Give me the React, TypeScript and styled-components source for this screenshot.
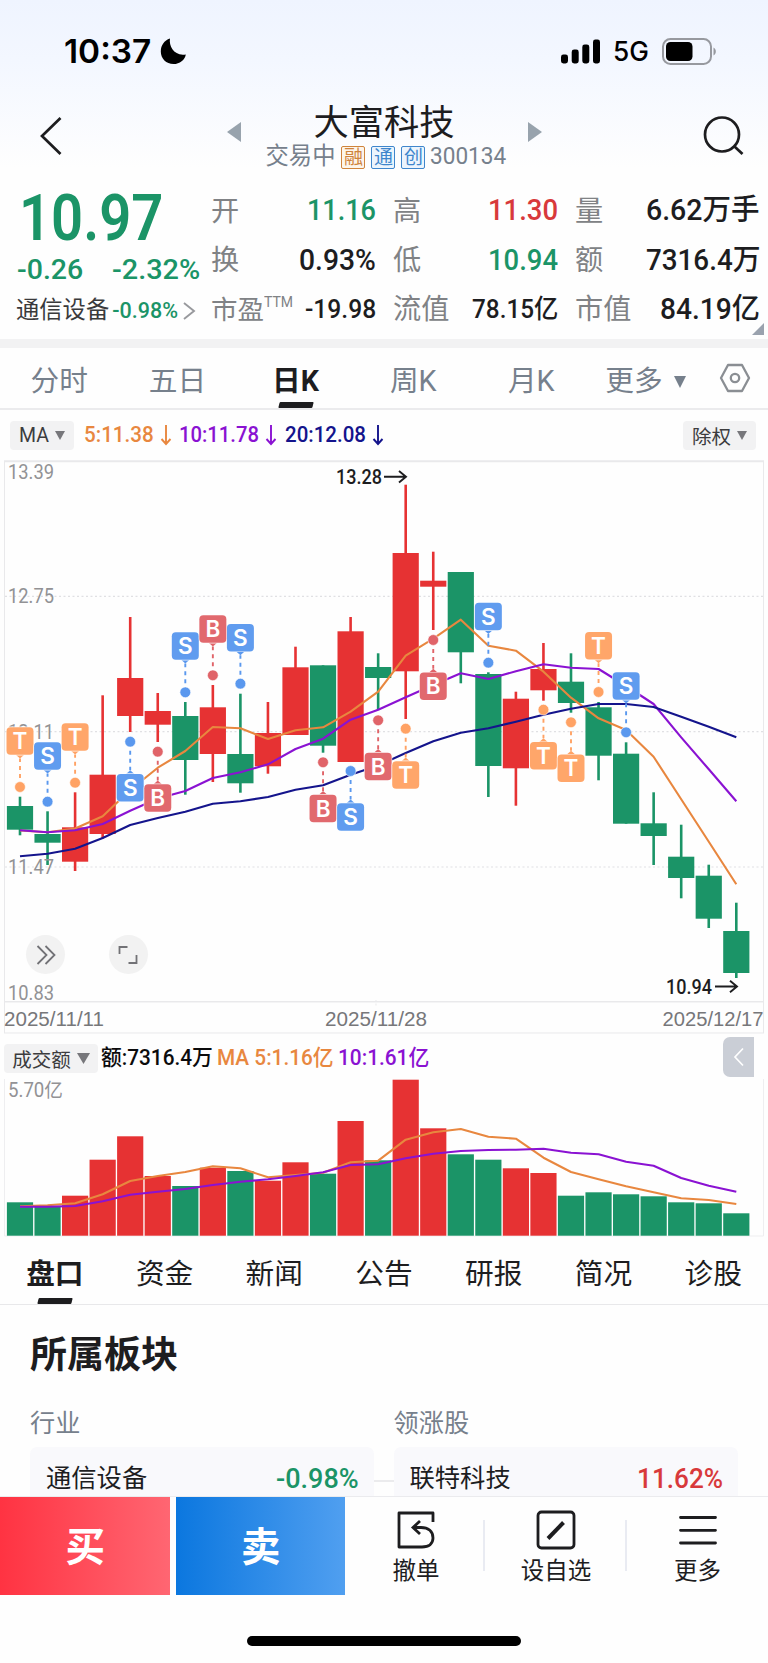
import React, { useLayoutEffect, useRef, useState } from "react";
import styled, { createGlobalStyle } from "styled-components";

const RED = "#e63233";
const GREEN = "#1b9467";
const ORANGE = "#e8873f";
const PURPLE = "#8a12d2";
const NAVY = "#14148c";
const INK = "#1d1d1f";
const SLATE = "#76808c";
const FONT = `Roboto, "Noto Sans CJK SC", sans-serif`;

const GlobalStyle = createGlobalStyle`
  * { box-sizing: border-box; }
  body { margin: 0; background: #fefefe; }
  svg { display: block; }
`;

const Page = styled.div`
  width: 768px;
  height: 1663px;
  overflow: hidden;
  display: flex;
  flex-direction: column;
  font-family: ${FONT};
  color: ${INK};
  line-height: 1;
  background: linear-gradient(#eff4ff 0px, #f3f7ff 60px, #fefefe 168px);
`;

/* Condensed figures: the text is squeezed to the given width. */
const FitBox = styled.span<{ $w: number; $size: number; $color?: string; $weight?: number }>`
  display: block;
  flex: none;
  width: ${(p) => p.$w}px;
  height: ${(p) => p.$size}px;
  font-size: ${(p) => p.$size}px;
  font-weight: ${(p) => p.$weight ?? 500};
  color: ${(p) => p.$color ?? "inherit"};
  white-space: nowrap;
`;
const FitInner = styled.span`
  display: inline-block;
  line-height: 1;
  transform-origin: 0 50%;
`;

type FitProps = { w: number; size: number; color?: string; weight?: number; children: string };
function Fit({ w, size, color, weight, children }: FitProps) {
  const ref = useRef<HTMLSpanElement>(null);
  const [scale, setScale] = useState(1);
  useLayoutEffect(() => {
    if (ref.current) setScale(w / ref.current.offsetWidth);
  }, [w, size, children]);
  return (
    <FitBox $w={w} $size={size} $color={color} $weight={weight}>
      <FitInner ref={ref} style={{ transform: `scaleX(${scale})` }}>
        {children}
      </FitInner>
    </FitBox>
  );
}

/* ---------- status bar ---------- */
const StatusBar = styled.header`
  flex: none;
  height: 96px;
  padding: 7px 51px 0 64px;
  display: flex;
  align-items: center;
  justify-content: space-between;
  color: #000;
  font-family: Inter, ${FONT};
`;
const StatusGroup = styled.div<{ $gap: number }>`
  display: flex;
  align-items: center;
  gap: ${(p) => p.$gap}px;
`;

/* ---------- navigation ---------- */
const NavBar = styled.nav`
  flex: none;
  height: 80px;
  padding: 0 24px 0 39px;
  display: flex;
  justify-content: space-between;
  align-items: center;
`;
const NavCenter = styled.div`
  width: 317px;
  margin-left: 2px;
  display: flex;
  justify-content: space-between;
`;
const NavArrow = styled.svg`
  margin-top: 23px;
`;
const TitleBlock = styled.div`
  width: 242px;
  height: 80px;
  display: flex;
  flex-direction: column;
  align-items: center;
`;
const Title = styled.h1`
  margin: 9px 0 0;
  font-size: 35.3px;
  font-weight: 400;
  line-height: 36px;
`;
const SubTitle = styled.div`
  margin: 4px 0 0 4px;
  height: 24px;
  display: flex;
  align-items: center;
  gap: 5px;
  font-size: 23.3px;
  white-space: nowrap;
  color: ${SLATE};
`;
const Tag = styled.span<{ $tone: string; $bg: string }>`
  width: 24px;
  height: 23px;
  margin-left: 1px;
  border: 1px solid ${(p) => p.$tone};
  border-radius: 2px;
  background: ${(p) => p.$bg};
  color: ${(p) => p.$tone};
  font-size: 19px;
  line-height: 21px;
  display: flex;
  justify-content: center;
`;

/* ---------- quote ---------- */
const Quote = styled.section`
  flex: none;
  position: relative;
  height: 163px;
  padding: 9px 8px 0 16px;
  display: grid;
  grid-template-columns: 195px 165px 17px 165px 17px 185px;
`;
const Summary = styled.div`
  display: flex;
  flex-direction: column;
`;
const PriceRow = styled.div`
  height: 64px;
  padding-left: 3px;
  display: flex;
  align-items: center;
  margin-top: 2px;
`;
const ChangeRow = styled.div`
  height: 38px;
  padding-left: 1px;
  display: flex;
  align-items: center;
  gap: 29px;
`;
const SectorRow = styled.div`
  height: 44px;
  display: flex;
  align-items: center;
  font-size: 23.3px;
  gap: 3px;
  white-space: nowrap;
  color: #3a3a3c;
`;
const Stats = styled.div`
  padding-top: 1px;
  display: flex;
  flex-direction: column;
`;
const StatRow = styled.div`
  height: 49.4px;
  display: flex;
  align-items: center;
  justify-content: space-between;
`;
const StatLabel = styled.span`
  display: flex;
  padding-top: 2px;
  font-size: 28.2px;
  color: #808285;
`;
const SupLabel = styled(StatLabel)`
  font-size: 26.5px;
`;
const Sup = styled.sup`
  line-height: 1;
  margin-top: -2px;
`;
const Corner = styled.svg`
  position: absolute;
  right: 4px;
  bottom: 4px;
`;
const Band = styled.div`
  flex: none;
  height: 9px;
  background: #f2f2f3;
`;

/* ---------- period tabs ---------- */
const PeriodTabs = styled.nav`
  flex: none;
  height: 62px;
  border-bottom: 2px solid #ebebed;
  display: grid;
  grid-template-columns: 118.5px 118px 118px 117.5px 118.5px 110px 67.5px;
`;
const Tab = styled.div<{ $active?: boolean }>`
  position: relative;
  display: flex;
  align-items: center;
  justify-content: center;
  gap: 11px;
  padding-top: 7px;
  font-size: 28.7px;
  font-weight: ${(p) => (p.$active ? 700 : 400)};
  color: ${(p) => (p.$active ? INK : SLATE)};
  &::after {
    content: "";
    display: ${(p) => (p.$active ? "block" : "none")};
    position: absolute;
    bottom: 0;
    left: 50%;
    width: 34px;
    height: 6px;
    margin-left: -17px;
    border-radius: 1px;
    background: ${INK};
    transform: skewX(-14deg);
  }
`;
const SettingsTab = styled(Tab)`
  padding: 0 0 0 2px;
`;

/* ---------- chart bars ---------- */
const IndicatorBar = styled.div`
  flex: none;
  height: 50px;
  padding: 0 12px 0 10px;
  display: flex;
  align-items: center;
`;
const Pill = styled.button<{ $w: number }>`
  width: ${(p) => p.$w}px;
  height: 29px;
  padding: 0;
  border: 0;
  border-radius: 4px;
  background: #f2f2f3;
  display: flex;
  align-items: center;
  justify-content: center;
  gap: 6px;
  color: #3c3c3e;
  font-family: ${FONT};
  font-size: 19.5px;
`;
const Legend = styled.div<{ $c: string; $ml: number }>`
  display: flex;
  align-items: center;
  gap: 6px;
  margin-left: ${(p) => p.$ml}px;
  color: ${(p) => p.$c};
`;
const Push = styled.div`
  flex: 1;
`;
const ChartArea = styled.div`
  flex: none;
  position: relative;
  height: 576px;
`;
const RoundButton = styled.button<{ $x: number }>`
  position: absolute;
  left: ${(p) => p.$x}px;
  top: 475px;
  width: 39px;
  height: 39px;
  padding: 0;
  border: 0;
  border-radius: 50%;
  background: #f2f2f2;
  display: flex;
  align-items: center;
  justify-content: center;
`;
const VolumeBar = styled.div`
  flex: none;
  height: 42px;
  padding: 2px 14px 0 4px;
  display: flex;
  align-items: center;
`;
const Collapse = styled.button`
  width: 31px;
  height: 40px;
  margin-top: -2px;
  padding: 0;
  border: 0;
  border-radius: 7px 0 0 7px;
  background: #caced6;
  display: flex;
  align-items: center;
  justify-content: center;
`;
const VolumeArea = styled.div`
  flex: none;
  height: 159px;
`;

/* ---------- lower page ---------- */
const InfoTabs = styled.nav`
  flex: none;
  height: 68px;
  border-bottom: 1px solid #e8e8ea;
  display: grid;
  grid-template-columns: repeat(7, 1fr);
`;
const InfoTab = styled(Tab)`
  color: ${INK};
  padding: 7px 0 0;
  font-size: 28.7px;
`;
const Board = styled.section`
  flex: 1;
  min-height: 0;
  overflow: hidden;
  padding: 32px 30px 0;
`;
const BoardTitle = styled.h2`
  margin: 0;
  font-size: 37px;
  line-height: 38px;
  font-weight: 700;
`;
const BoardGrid = styled.div`
  margin-top: 32px;
  display: grid;
  grid-template-columns: 344px 19.5px 344px;
`;
const BoardLabel = styled.div`
  height: 41px;
  font-size: 25.2px;
  line-height: 34px;
  color: ${SLATE};
`;
const Card = styled.div`
  height: 66px;
  border-radius: 7px 7px 0 0;
  background: #f9f9fc;
  padding: 0 15px 2px 16px;
  margin-top: -1px;
  display: flex;
  align-items: center;
  justify-content: space-between;
  font-size: 25.3px;
`;
const Joint = styled.div`
  align-self: end;
  height: 2px;
  margin-bottom: 31px;
  background: #ebebed;
`;

/* ---------- trade bar ---------- */
const TradeBar = styled.footer`
  flex: none;
  height: 167px;
  border-top: 1px solid #ebebee;
  background: #fefefe;
  display: flex;
  flex-direction: column;
  align-items: center;
  justify-content: space-between;
  padding-bottom: 17px;
`;
const TradeRow = styled.div`
  width: 100%;
  height: 98px;
  display: flex;
`;
const TradeButton = styled.button<{ $from: string; $to: string }>`
  width: 169.5px;
  height: 98px;
  margin-right: 6px;
  padding: 0 0 5px 1px;
  border: 0;
  background: linear-gradient(90deg, ${(p) => p.$from}, ${(p) => p.$to});
  color: #fff;
  font-family: ${FONT};
  font-size: 39.5px;
  font-weight: 700;
`;
const Action = styled.div<{ $w: number; $line?: boolean }>`
  position: relative;
  width: ${(p) => p.$w}px;
  padding-top: 13px;
  display: flex;
  flex-direction: column;
  align-items: center;
  gap: 10px;
  font-size: 23.5px;
  &::after {
    content: "";
    display: ${(p) => (p.$line ? "block" : "none")};
    position: absolute;
    right: 0;
    top: 23px;
    width: 2px;
    height: 51px;
    background: #e9ebf2;
  }
`;
const CancelAction = styled(Action)`
  padding-right: 4px;
`;
const HomeIndicator = styled.div`
  width: 274px;
  height: 10px;
  border-radius: 5px;
  background: #000;
`;

const Caret = ({ w = 10, h = 9, fill = "#77777b" }: { w?: number; h?: number; fill?: string }) => (
  <svg width={w} height={h} viewBox="0 0 10 10" preserveAspectRatio="none">
    <path d="M0 0H10L5 10Z" fill={fill} />
  </svg>
);
const DownArrow = ({ color }: { color: string }) => (
  <svg width="12" height="22" viewBox="0 0 12 22" fill="none" stroke={color} strokeWidth="1.9">
    <path d="M6 1V20M1.5 15L6 20L10.5 15" />
  </svg>
);

/* ---------- chart data (chart-space pixels) ---------- */
const STEP = 27.55;
const cx = (i: number) => 20 + STEP * i;
type Candle = ["r" | "g", number, number, number, number];
// colour, high, body top, body bottom, low
const candles: Candle[] = [
  ["g", 796.7, 806, 829.7, 835.3], ["g", 811.3, 834, 842.7, 865], ["r", 792.3, 827.3, 861.7, 871],
  ["r", 695.3, 774.7, 834, 838.5], ["r", 617, 678, 716, 732], ["r", 693, 711, 724.7, 742],
  ["g", 702, 716, 760, 794.7], ["r", 685, 707.3, 754, 782], ["g", 693.7, 754, 783.3, 792.7],
  ["r", 702, 733, 766.3, 773.7], ["r", 646.7, 667.3, 735, 735], ["g", 665.3, 665.3, 745.7, 752.7],
  ["r", 617, 631.3, 762, 762], ["g", 653.3, 667, 678, 710], ["r", 484.7, 553, 671.3, 719],
  ["r", 551.7, 580.7, 586.7, 630], ["g", 572, 572, 652.3, 683.3], ["g", 672.3, 674, 766, 797],
  ["r", 691.7, 698.7, 768.3, 805.7], ["r", 643, 669, 690.3, 700.7], ["g", 653.3, 681.7, 703, 712.7],
  ["g", 702, 707.3, 755.7, 780.3], ["g", 742.3, 753.7, 823.7, 823.7], ["g", 792.3, 823.3, 836, 865],
  ["g", 824.7, 856.7, 878, 898.3], ["g", 864.7, 875.7, 918.7, 928], ["g", 902.7, 931, 973, 978],
];
const ma5 = [830.5, 832.2, 828.5, 816.3, 790, 767.7, 751, 727, 728.3, 739, 730.3, 727.3, 711.7, 691.7, 655.7, 638.7, 619.7, 645.7, 650.7, 671.7, 697.7, 718.3, 730, 756.7, 799.3, 841.7, 884.3];
const ma10 = [830.3, 832.3, 830.3, 824, 810.7, 798.5, 791, 778, 772.3, 764.3, 749, 738.7, 719.7, 709.7, 697.3, 685, 673.3, 679, 671.3, 664.3, 667.7, 669, 686, 704, 737.3, 769.3, 801.3];
const ma20 = [856.3, 853.7, 848.7, 838, 825, 818, 811.7, 803.7, 801.3, 797, 789.7, 785.3, 774.7, 765.5, 753, 741.3, 732.7, 728.3, 721.7, 714.7, 708.7, 704, 704, 707, 716.7, 726.7, 737.3];
type Mark = [number, "T" | "S" | "B", number, number];
// index, letter, badge centre, dot centre
const marks: Mark[] = [
  [0, "T", 741, 787], [1, "S", 756, 801.7], [2, "T", 737, 782.7], [4, "S", 787.7, 741.7], [5, "B", 798, 751.7],
  [6, "S", 646, 692.3], [8, "S", 637.7, 683.7], [7, "B", 629, 675.3], [11, "B", 808.5, 762.3], [12, "S", 817, 771],
  [13, "B", 766.5, 720.3], [14, "T", 775, 728.7], [15, "B", 686.3, 640], [17, "S", 616.5, 662.7],
  [19, "T", 755.8, 709.7], [20, "T", 768.3, 722.3], [21, "T", 645.8, 692], [22, "S", 686, 732.3],
];
const markColor = { T: "#ffa264", S: "#5a98ee", B: "#e06368" };
const volTops = [1202.3, 1206, 1195.7, 1159.7, 1136.3, 1176, 1186, 1167.7, 1171, 1180.7, 1162.3, 1173.7, 1121, 1160.3, 1079.7, 1128.3, 1154.3, 1159.7, 1168.3, 1173, 1195.7, 1192.3, 1194.3, 1196.3, 1202.3, 1203.3, 1213.3];
const vma5 = [1206.3, 1205.3, 1203.3, 1194.3, 1181, 1176, 1172, 1166.3, 1168.3, 1177.3, 1175, 1172.7, 1162.3, 1160.7, 1139.7, 1132.3, 1129, 1136.7, 1138.7, 1157.7, 1172, 1179.3, 1186.3, 1192.3, 1198.3, 1200, 1204];
const vma10 = [1206.7, 1206.7, 1206, 1201.3, 1194.7, 1191.7, 1189, 1185, 1181.7, 1179.3, 1176, 1172.3, 1165, 1164.3, 1158.3, 1153.7, 1151, 1150, 1149.7, 1148.7, 1152.7, 1154.3, 1161.7, 1165.7, 1178, 1185.7, 1191.7];
const points = (ys: number[]) => ys.map((y, i) => `${cx(i).toFixed(1)},${y}`).join(" ");
const tone = (c: "r" | "g") => (c === "r" ? RED : GREEN);

const Line = ({ ys, color }: { ys: number[]; color: string }) => (
  <polyline points={points(ys)} fill="none" stroke={color} strokeWidth="2.1" strokeLinejoin="round" />
);

function Label({ x, y, w, size = 19.5, fill = "#929295", weight = 400, font, children }: {
  x: number; y: number; w: number; size?: number; fill?: string; weight?: number; font?: string; children: string;
}) {
  return (
    <text x={x} y={y} textLength={w} lengthAdjust="spacingAndGlyphs" fontSize={size} fill={fill} fontWeight={weight} fontFamily={font ?? FONT}>
      {children}
    </text>
  );
}

function Badge({ mark: [i, letter, by, dy] }: { mark: Mark }) {
  const c = markColor[letter];
  const x = cx(i);
  const s = dy > by ? 1 : -1;
  const edge = by + s * 13.5;
  return (
    <g>
      <line x1={x} y1={dy - s * 9} x2={x} y2={edge + s * 4} stroke={c} strokeWidth="1.9" strokeDasharray="4 4" />
      <circle cx={x} cy={dy} r="5.4" fill={c} stroke="#fff" strokeOpacity="0.6" strokeWidth="1" />
      <path d={`M${x - 4.5} ${edge}L${x} ${edge + s * 4}L${x + 4.5} ${edge}Z`} fill={c} />
      <rect x={x - 14.1} y={by - 14.4} width="28.2" height="28.8" rx="4.5" fill="#fff" fillOpacity="0.9" />
      <rect x={x - 13.5} y={by - 13.7} width="27" height="27.4" rx="4" fill={c} fillOpacity="0.96" />
      <text x={x} y={by + 8} textAnchor="middle" fontFamily="Inter, sans-serif" fontSize="22.5" fontWeight="600" fill="#fff">{letter}</text>
    </g>
  );
}

function PriceChart() {
  return (
    <svg width="768" height="576" viewBox="0 460 768 576">
      <g stroke="#e9e9eb" fill="none">
        <path d="M4 461.2H764" strokeWidth="2" />
        <path d="M4.5 461V1033M763.5 461V1033" strokeWidth="1" />
        <path d="M4 1001.7H764" strokeWidth="1.6" />
        <path d="M4 1033H764" strokeWidth="1" />
        <path d="M376 1000V1006" strokeDasharray="2 1.5" />
        <path d="M5 596.3H763M5 731.7H763M5 867H763" stroke="#e0e0e3" strokeDasharray="2 2.5" strokeWidth="1.2" />
      </g>
      <Label x={8} y={478.5} w={46}>13.39</Label>
      <Label x={8} y={603.3} w={46}>12.75</Label>
      <Label x={8} y={738.5} w={46}>12.11</Label>
      {candles.map(([c, hi, top, bot, lo], i) => (
        <g key={i} fill={tone(c)}>
          <rect x={cx(i) - 1.3} y={hi} width="2.6" height={lo - hi} />
          <rect x={cx(i) - 13.1} y={top} width="26.2" height={bot - top} />
        </g>
      ))}
      <Label x={8} y={874.3} w={46}>11.47</Label>
      <Label x={8} y={1000} w={46}>10.83</Label>
      <Line ys={ma5} color={ORANGE} />
      <Line ys={ma10} color={PURPLE} />
      <Line ys={ma20} color={NAVY} />
      {marks.map((m) => (
        <Badge key={m[0]} mark={m} />
      ))}
      <Label x={336} y={484} w={46} size={20} fill={INK} weight={500}>13.28</Label>
      <Label x={666} y={993.5} w={46} size={20} fill={INK} weight={500}>10.94</Label>
      <g stroke={INK} strokeWidth="1.9" fill="none">
        <path d="M384 476.8H405M399 471L406 476.8L399 482.6" />
        <path d="M715 986.5H736M730 980.7L737 986.5L730 992.3" />
      </g>
      <Label x={4} y={1026} w={100} size={19.5} fill="#77777a" font="Liberation Sans, sans-serif">2025/11/11</Label>
      <Label x={325} y={1026} w={102} size={19.5} fill="#77777a" font="Liberation Sans, sans-serif">2025/11/28</Label>
      <Label x={662.5} y={1026} w={101} size={19.5} fill="#77777a" font="Liberation Sans, sans-serif">2025/12/17</Label>
    </svg>
  );
}

function VolumeChart() {
  return (
    <svg width="768" height="159" viewBox="0 1078 768 159">
      <path d="M4.5 1079V1236M763.5 1079V1236H4.5" stroke="#eeeef0" fill="none" />
      <Label x={8} y={1096.5} w={55}>5.70亿</Label>
      {volTops.map((y, i) => (
        <rect key={i} x={cx(i) - 13.1} y={y} width="26.2" height={1235.7 - y} fill={tone(candles[i][0])} />
      ))}
      <Line ys={vma5} color={ORANGE} />
      <Line ys={vma10} color={PURPLE} />
    </svg>
  );
}

type Stat = { label: string; sup?: string; value: string; w: number; size: number; color?: string };
const statCols: Stat[][] = [
  [
    { label: "开", value: "11.16", w: 69, size: 29, color: GREEN },
    { label: "换", value: "0.93%", w: 77, size: 29 },
    { label: "市盈", sup: "TTM", value: "-19.98", w: 71, size: 26 },
  ],
  [
    { label: "高", value: "11.30", w: 70, size: 29, color: "#d8393b" },
    { label: "低", value: "10.94", w: 70, size: 29, color: GREEN },
    { label: "流值", value: "78.15亿", w: 86, size: 26 },
  ],
  [
    { label: "量", value: "6.62万手", w: 114, size: 29 },
    { label: "额", value: "7316.4万", w: 114, size: 29 },
    { label: "市值", value: "84.19亿", w: 100, size: 29 },
  ],
];
const StatColumn = ({ rows }: { rows: Stat[] }) => (
  <Stats>
    {rows.map((r) => (
      <StatRow key={r.label}>
        {r.sup ? (
          <SupLabel>
            {r.label}
            <Sup><Fit w={29} size={15} weight={400}>{r.sup}</Fit></Sup>
          </SupLabel>
        ) : (
          <StatLabel>{r.label}</StatLabel>
        )}
        <Fit w={r.w} size={r.size} color={r.color}>{r.value}</Fit>
      </StatRow>
    ))}
  </Stats>
);

export default function App() {
  return (
    <Page>
      <GlobalStyle />
      <StatusBar>
        <StatusGroup $gap={9}>
          <Fit w={87} size={33} weight={600}>10:37</Fit>
          <svg width="27" height="27" viewBox="0 0 27 27">
            <path d="M10 0.6C8.6 8.5 14.5 18.5 25.8 16.4C25 21.8 19.6 26 13.6 26C6.2 26 0.8 20.4 0.8 13.4C0.8 7.6 4.2 2.4 10 0.6Z" fill="#000" />
          </svg>
        </StatusGroup>
        <StatusGroup $gap={13}>
          <svg width="39" height="25" viewBox="0 0 39 25">
            <rect x="0" y="15.5" width="7" height="9" rx="2.4" />
            <rect x="10.7" y="10.5" width="7" height="14" rx="2.4" />
            <rect x="21.3" y="5.5" width="7" height="19" rx="2.4" />
            <rect x="32" y="0.5" width="7" height="24" rx="2.4" />
          </svg>
          <Fit w={36} size={27} weight={500}>5G</Fit>
          <svg width="55" height="27" viewBox="0 0 55 27">
            <rect x="1" y="1" width="48" height="25" rx="7.5" fill="none" stroke="#97999f" strokeWidth="2" />
            <rect x="4" y="4" width="26.5" height="19" rx="4.5" />
            <path d="M51.5 9.5C54.6 11 54.6 16 51.5 17.5Z" fill="#97999f" />
          </svg>
        </StatusGroup>
      </StatusBar>

      <NavBar>
        <svg width="24" height="40" viewBox="0 0 24 40" fill="none" stroke={INK} strokeWidth="2.7">
          <path d="M21.5 2L3 20L21.5 38" />
        </svg>
        <NavCenter>
          <NavArrow width="16" height="26" viewBox="0 0 16 26"><path d="M1 13L15 3V23Z" fill="#98a3ad" /></NavArrow>
          <TitleBlock>
            <Title>大富科技</Title>
            <SubTitle>
              交易中
              <Tag $tone="#cf843c" $bg="#fdf5ea">融</Tag>
              <Tag $tone="#3f86cc" $bg="#ecf5fd">通</Tag>
              <Tag $tone="#3f86cc" $bg="#ecf5fd">创</Tag>
              <Fit w={76} size={23.5} weight={400}>300134</Fit>
            </SubTitle>
          </TitleBlock>
          <NavArrow width="16" height="26" viewBox="0 0 16 26"><path d="M15 13L1 3V23Z" fill="#98a3ad" /></NavArrow>
        </NavCenter>
        <svg width="41" height="42" viewBox="0 0 41 42" fill="none" stroke={INK} strokeWidth="2.7">
          <circle cx="19" cy="19.5" r="17" />
          <path d="M31.5 31.5L39.5 39" />
        </svg>
      </NavBar>

      <Quote>
        <Summary>
          <PriceRow><Fit w={144} size={64} color={GREEN} weight={600}>10.97</Fit></PriceRow>
          <ChangeRow>
            <Fit w={66} size={28.5} color={GREEN}>-0.26</Fit>
            <Fit w={88} size={28.5} color={GREEN}>-2.32%</Fit>
          </ChangeRow>
          <SectorRow>
            通信设备
            <Fit w={66} size={21.5} color={GREEN}>-0.98%</Fit>
            <svg width="16" height="18" viewBox="0 0 16 18" fill="none" stroke="#98999d" strokeWidth="1.9"><path d="M3 1L13 9L3 17" /></svg>
          </SectorRow>
        </Summary>
        <StatColumn rows={statCols[0]} />
        <span />
        <StatColumn rows={statCols[1]} />
        <span />
        <StatColumn rows={statCols[2]} />
        <Corner width="12" height="12" viewBox="0 0 12 12"><path d="M12 0V12H0Z" fill="#9aa2ae" /></Corner>
      </Quote>
      <Band />

      <PeriodTabs>
        <Tab>分时</Tab>
        <Tab>五日</Tab>
        <Tab $active>日K</Tab>
        <Tab>周K</Tab>
        <Tab>月K</Tab>
        <Tab>更多<Caret w={12} h={12} fill={SLATE} /></Tab>
        <SettingsTab>
          <svg width="32" height="30" viewBox="0 0 32 30" fill="none" stroke="#8a8e93" strokeWidth="2.3">
            <path d="M9 2H23L30 15L23 28H9L2 15Z" strokeLinejoin="round" />
            <circle cx="16" cy="15" r="4.2" />
          </svg>
        </SettingsTab>
      </PeriodTabs>

      <IndicatorBar>
        <Pill $w={64}>MA<Caret /></Pill>
        <Legend $c={ORANGE} $ml={10}><Fit w={70} size={21.5}>5:11.38</Fit><DownArrow color={ORANGE} /></Legend>
        <Legend $c={PURPLE} $ml={7}><Fit w={80} size={21.5}>10:11.78</Fit><DownArrow color={PURPLE} /></Legend>
        <Legend $c={NAVY} $ml={7.5}><Fit w={81} size={21.5}>20:12.08</Fit><DownArrow color={NAVY} /></Legend>
        <Push />
        <Pill $w={73}>除权<Caret /></Pill>
      </IndicatorBar>

      <ChartArea>
        <PriceChart />
        <RoundButton $x={26}>
          <svg width="20" height="20" viewBox="0 0 20 20" fill="none" stroke="#727276" strokeWidth="1.8"><path d="M1.5 1L10.5 10L1.5 19M9.5 1L18.5 10L9.5 19" /></svg>
        </RoundButton>
        <RoundButton $x={108.5}>
          <svg width="20" height="20" viewBox="0 0 20 20" fill="none" stroke="#727276" strokeWidth="1.8"><path d="M1.5 9V2H9.5M18.5 10V18H10.5" /></svg>
        </RoundButton>
      </ChartArea>

      <VolumeBar>
        <Pill $w={94}>成交额<Caret w={13} h={11} /></Pill>
        <Legend $c="#0b0b0c" $ml={3}><Fit w={112} size={21.5}>额:7316.4万</Fit></Legend>
        <Legend $c={ORANGE} $ml={4}><Fit w={117} size={21.5}>MA 5:1.16亿</Fit></Legend>
        <Legend $c={PURPLE} $ml={4}><Fit w={91} size={21.5}>10:1.61亿</Fit></Legend>
        <Push />
        <Collapse>
          <svg width="12" height="20" viewBox="0 0 12 20" fill="none" stroke="#fff" strokeWidth="1.7"><path d="M10 1.5L2 10L10 18.5" /></svg>
        </Collapse>
      </VolumeBar>
      <VolumeArea><VolumeChart /></VolumeArea>

      <InfoTabs>
        {["盘口", "资金", "新闻", "公告", "研报", "简况", "诊股"].map((t, i) => (
          <InfoTab key={t} $active={i === 0}>{t}</InfoTab>
        ))}
      </InfoTabs>

      <Board>
        <BoardTitle>所属板块</BoardTitle>
        <BoardGrid>
          <BoardLabel>行业</BoardLabel>
          <span />
          <BoardLabel>领涨股</BoardLabel>
          <Card>通信设备<Fit w={83} size={28} color={GREEN}>-0.98%</Fit></Card>
          <Joint />
          <Card>联特科技<Fit w={86} size={28} color="#d8393b">11.62%</Fit></Card>
        </BoardGrid>
      </Board>

      <TradeBar>
        <TradeRow>
          <TradeButton $from="#ff3342" $to="#ff6672">买</TradeButton>
          <TradeButton $from="#0b77df" $to="#509ff0">卖</TradeButton>
          <CancelAction $w={134} $line>
            <svg width="40" height="40" viewBox="0 0 40 40" fill="none" stroke={INK} strokeWidth="2.8">
              <path d="M37 12V3H3V37H26C33 37 37 33.5 37 28C37 21 32 17.5 25 17.5H18" strokeLinejoin="round" />
              <path d="M24 11L17 17.5L24 24" />
            </svg>
            撤单
          </CancelAction>
          <Action $w={142} $line>
            <svg width="40" height="40" viewBox="0 0 40 40" fill="none" stroke={INK} strokeWidth="2.8">
              <rect x="2" y="2" width="36" height="36" rx="3.5" />
              <path d="M12 28.5L27.5 12.5" strokeWidth="4" />
            </svg>
            设自选
          </Action>
          <Action $w={141}>
            <svg width="40" height="40" viewBox="0 0 40 40" fill="none" stroke={INK} strokeWidth="2.8" strokeLinecap="round">
              <path d="M2.5 7.5H37.5M2.5 20.3H37.5M2.5 33H37.5" />
            </svg>
            更多
          </Action>
        </TradeRow>
        <HomeIndicator />
      </TradeBar>
    </Page>
  );
}
